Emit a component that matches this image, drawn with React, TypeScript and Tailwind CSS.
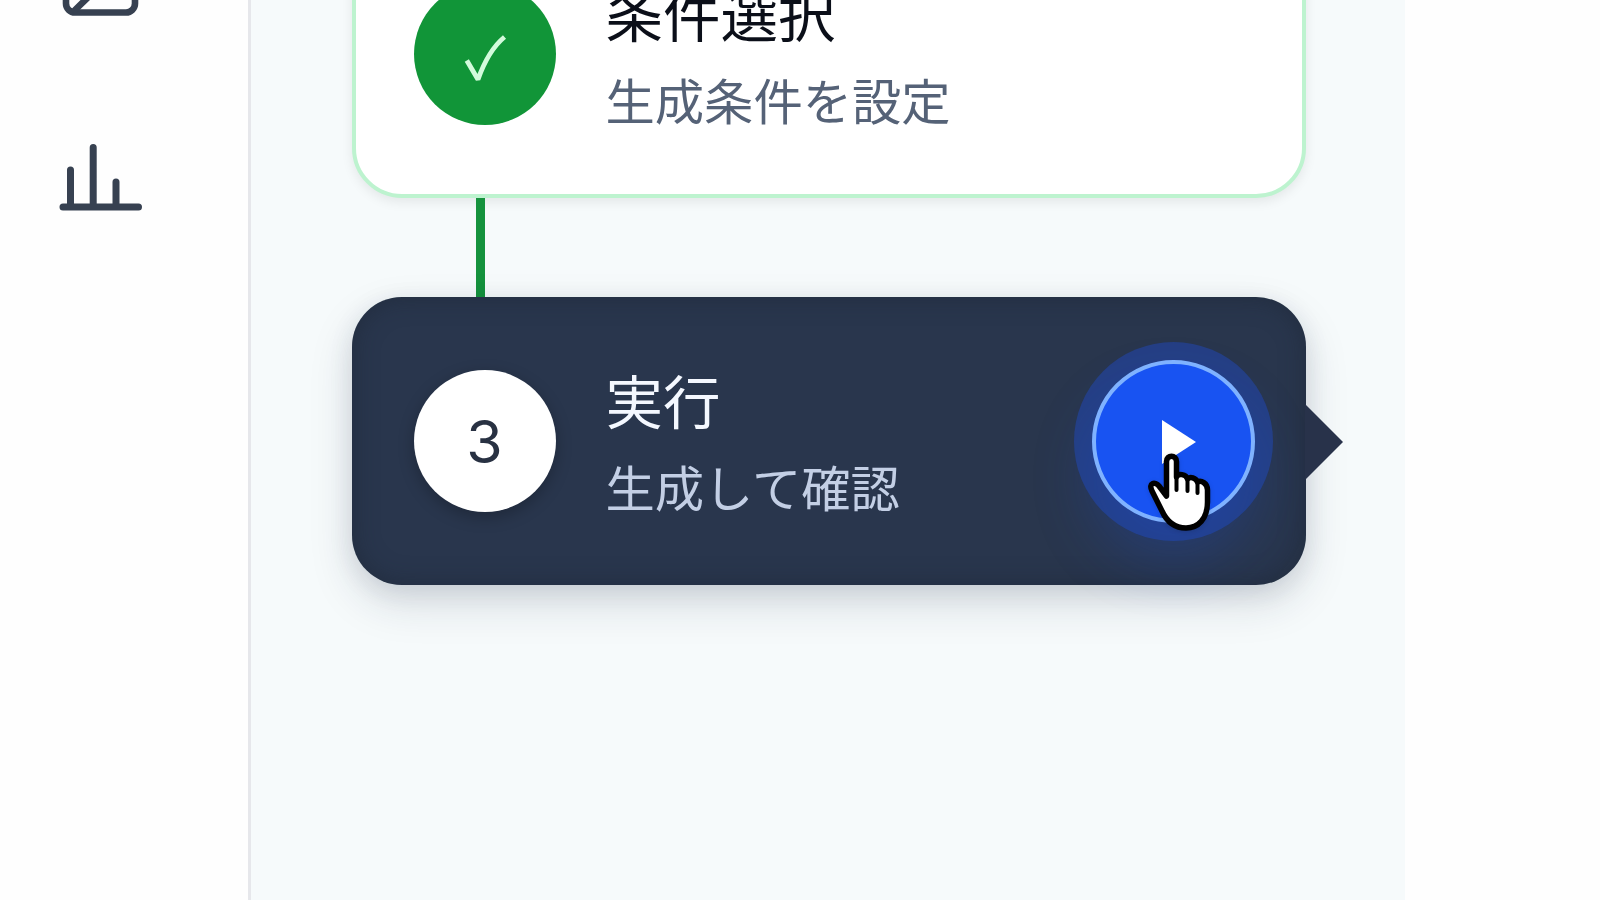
import { ReactNode } from 'react';

function ImageIcon() {
  return (
    <svg width="88" height="88" viewBox="0 0 88 88" fill="none" stroke="#374151" strokeWidth="6.6" strokeLinecap="round" strokeLinejoin="round">
      <rect x="10" y="9.5" width="69" height="69" rx="9" />
      <path d="M19 76 58 38l20 19" />
      <circle cx="30" cy="30" r="6" />
    </svg>
  );
}

function ChartIcon() {
  return (
    <svg width="88" height="72" viewBox="0 0 88 72" fill="none" stroke="#374151" strokeWidth="7" strokeLinecap="round">
      <path d="M7 67H82.500M14.500 67V30M37.200 67V7.500M60 67V42" />
    </svg>
  );
}

function CheckIcon() {
  return (
    <svg className="mt-2" width="44" height="50" viewBox="0 0 44 50" fill="none" stroke="#d3fbdc" strokeWidth="4.8" strokeLinejoin="bevel">
      <path d="M3.800 27.500 15 46.500C21 29.500 30 13.500 41.500 4" />
    </svg>
  );
}

function HandCursor() {
  return (
    <svg className="absolute top-[86px] left-[49px] drop-shadow-sm" width="70" height="86" viewBox="0 0 70 86" fill="#fff" stroke="#000" strokeWidth="5.5" strokeLinejoin="round" strokeLinecap="round">
      <path d="M21.500 46V11.500C21.500 4.500 31.500 4.500 31.500 11.500V27C33 23 41 24 42.500 29C45 26 51 28 52.500 32C56 30 62.500 33 62.500 40V52C62.500 69 53 78 41 78C29 78 22 72 17 61L7 41C3 33 10 31 14 36Z" />
      <path d="M31.500 26V40M42.500 29V41M52.500 32V43" fill="none" strokeWidth="4" />
    </svg>
  );
}

interface StepTextProps {
  title: string;
  note: string;
  titleClass: string;
  noteClass: string;
}

function StepText({ title, note, titleClass, noteClass }: StepTextProps) {
  return (
    <div className="flex-1 pt-[3px] font-['Noto_Sans_CJK_JP',sans-serif]">
      <div className={`text-[57.5px] leading-[86px] ${titleClass}`}>{title}</div>
      <div className={`text-[49.3px] leading-[88px] ${noteClass}`}>{note}</div>
    </div>
  );
}

function Badge({ className, children }: { className: string; children: ReactNode }) {
  return (
    <div className={`mr-[50px] flex size-[142px] shrink-0 items-center justify-center rounded-full ${className}`}>
      {children}
    </div>
  );
}

export default function App() {
  return (
    <div className="flex h-[900px] w-[1600px] overflow-hidden bg-[#fefefe]">
      <nav className="flex w-[251px] shrink-0 flex-col border-r-[3px] border-[#e6e7eb] pl-[56px]">
        <div className="-mt-[66px]">
          <ImageIcon />
        </div>
        <div className="mt-[118px]">
          <ChartIcon />
        </div>
      </nav>

      <main className="w-[1154px] shrink-0 bg-[#f6fafb] pr-[99px] pl-[101px]">
        <section className="-mt-[90px] flex h-[288px] items-center rounded-[50px] border-4 border-[#bdf3cf] bg-white pl-[57.5px] shadow-[0_4px_12px_rgba(0,0,0,0.08)]">
          <Badge className="bg-[#119538]">
            <CheckIcon />
          </Badge>
          <StepText title="条件選択" note="生成条件を設定" titleClass="text-[#0b0f19]" noteClass="text-[#556277]" />
        </section>

        <div className="ml-[124px] h-[99px] w-[9px] bg-[#15923d]" />

        <section className="relative flex h-[288px] items-center rounded-[50px] bg-[#29364d] pr-[51px] pl-[61.5px] shadow-[0_18px_44px_rgba(30,41,70,0.15),0_6px_24px_rgba(30,41,70,0.10),inset_0_0_24px_rgba(28,36,50,0.55)]">
          <Badge className="bg-white shadow-[0_5px_16px_rgba(0,0,0,0.25)]">
            <span className="pt-[3px] font-['Inter',sans-serif] text-[59px] text-[#283142]">3</span>
          </Badge>
          <StepText title="実行" note="生成して確認" titleClass="text-[#f4f8ff]" noteClass="text-[#c3cfe5]" />
          <button className="relative flex size-[163px] items-center justify-center rounded-full border-[4.5px] border-[#7fb2ff] bg-[#1853f2] shadow-[0_0_0_18px_rgba(29,78,216,0.4),0_36px_60px_rgba(29,78,216,0.28)]">
            <svg className="mt-px ml-2.5" width="34" height="44" viewBox="0 0 34 44" fill="#fff">
              <path d="M0 0 34 22 0 44Z" />
            </svg>
            <HandCursor />
          </button>
          <svg className="absolute top-[107px] -right-[37px]" width="38" height="76" viewBox="0 0 38 76" fill="#28324a">
            <path d="M0 0 38 38 0 76Z" />
          </svg>
        </section>
      </main>
    </div>
  );
}
